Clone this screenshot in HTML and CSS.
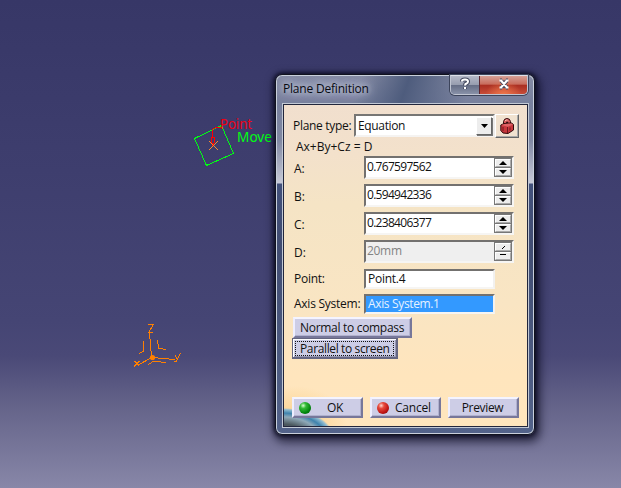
FILE: index.html
```html
<!DOCTYPE html>
<html lang="en">
<head>
<meta charset="utf-8">
<title>Plane Definition</title>
<link rel="stylesheet" href="styles.css">
</head>
<body>
<main class="workspace">
  <svg class="scene" width="621" height="488" viewBox="0 0 621 488">
    <g shape-rendering="crispEdges" fill="none">
      <path class="green" d="M194.5 138.5L221.500 125.500L233.500 153.500L206.500 165.500Z"/>
      <path class="red" d="M222 127.500H216L212.500 129.500V137.500M211 137.500h3M211.500 137V141L213 146L214.500 141V137"/>
      <path class="orange thin" d="M209 141L218 150M218 141L209 150"/>
      <path class="orange" d="M149.500 333L151.500 357M152 357.500L175 359.500M152 357.500L138 365M143.500 341V351L139.500 353.500M157.500 340L158.500 348.500L166.500 349.500M148.500 364.500L153 361.500H160L161.500 362.500H165.500"/>
      <path class="orange" d="M148 324.500H153.500L148.500 332.500H153M134.500 361L139.500 366.500M139.500 361L134 366.500M175 355L177.500 359.500M180.500 353.500L176 361.500H174"/>
    </g>
    <circle class="origin" cx="152.500" cy="357.500" r="2.600"/>
    <text class="cad red-text" x="220" y="129" textLength="32" lengthAdjust="spacingAndGlyphs">Point</text>
    <text class="cad green-text" x="237" y="142" textLength="35" lengthAdjust="spacingAndGlyphs">Move</text>
  </svg>

  <section class="dialog">
    <header class="titlebar">
      <h1 class="title">Plane Definition</h1>
      <div class="caption-buttons">
        <button class="caption help" aria-label="Help"><svg width="12" height="14" viewBox="0 0 12 14"><path class="glyph-edge" d="M3 4.500V4Q3 2.500 6 2.500T9 4.500Q9 6 7.500 6.500Q6 7 6 8.500M6 10.500v1.500"/><path class="glyph" d="M3 4.500V4Q3 2.500 6 2.500T9 4.500Q9 6 7.500 6.500Q6 7 6 8.500M6 10v2"/></svg></button>
        <button class="caption close" aria-label="Close"><svg width="14" height="14" viewBox="0 0 14 14"><path class="glyph-edge" d="M3 3.500H5M9 3.500H11M3 10.500H5M9 10.500H11M4 3.500L10 10.500M10 3.500L4 10.500"/><path class="glyph" d="M2.500 3.500H5.500M8.500 3.500H11.500M2.500 10.500H5.500M8.500 10.500H11.500M4 3.500L10 10.500M10 3.500L4 10.500"/></svg></button>
      </div>
    </header>

    <div class="client">
      <div class="type-row">
        <label class="type-label">Plane type:</label>
        <div class="combo"><span>Equation</span><i class="drop"><svg width="7" height="4"><path d="M0 0H7L3.500 4Z"/></svg></i></div>
        <button class="lock" aria-label="Lock"><svg width="16" height="18" viewBox="0 0 16 18">
          <path d="M4.500 8V4.500Q5 1.500 8 1.500T11.500 4.500V7" fill="#d75b5e" stroke="#310b0d"/>
          <path d="M7 8V6Q7 4.500 8 4.500T9.500 6V7" fill="#310b0d"/>
          <path d="M1.800 8L5 6.500L12.500 6L14.500 7.500V13L9 16.500L4 16L1.800 13.500Z" fill="#c7363c" stroke="#300b0c"/>
          <path d="M2.500 8L5.500 7L12 6.500L14 7.800L8.500 9.800Z" fill="#df6265"/>
          <path d="M8.500 10V16M4 10V14M11 10.500v3" stroke="#6e171d" fill="none"/>
          <path d="M6 4Q7 2.500 8.500 3" fill="none" stroke="#ffc1b5"/>
        </svg></button>
      </div>
      <p class="equation">Ax+By+Cz = D</p>

      <div class="fields">
        <div class="field"><label>A:</label><div class="spinner"><span>0.767597562</span><div class="steps"><i><svg width="8" height="4"><path d="M0 4H8L4 0Z"/></svg></i><i><svg width="8" height="4"><path d="M0 0H8L4 4Z"/></svg></i></div></div></div>
        <div class="field"><label>B:</label><div class="spinner"><span>0.594942336</span><div class="steps"><i><svg width="8" height="4"><path d="M0 4H8L4 0Z"/></svg></i><i><svg width="8" height="4"><path d="M0 0H8L4 4Z"/></svg></i></div></div></div>
        <div class="field"><label>C:</label><div class="spinner"><span>0.238406377</span><div class="steps"><i><svg width="8" height="4"><path d="M0 4H8L4 0Z"/></svg></i><i><svg width="8" height="4"><path d="M0 0H8L4 4Z"/></svg></i></div></div></div>
        <div class="field"><label>D:</label><div class="spinner disabled"><span>20mm</span><div class="steps"><i><svg width="8" height="4"><path d="M3 3h1v-1h1v-1h1v1h-1v1h-1v1H3Z"/></svg></i><i><svg width="8" height="4"><path d="M1 0H7V1H1Z"/></svg></i></div></div></div>
      </div>
      <div class="picks">
        <div class="pick"><label class="point-label">Point:</label><div class="entry"><span class="point-value">Point.4</span></div></div>
        <div class="pick"><label class="axis-label">Axis System:</label><div class="entry selected"><span class="axis-value">Axis System.1</span></div></div>
      </div>
      <div class="commands">
        <button class="push normal">Normal to compass</button>
        <button class="push parallel"><span>Parallel to screen</span></button>
      </div>
      <footer class="actions">
        <button class="push"><i class="ball go"></i><span class="ok">OK</span></button>
        <button class="push"><i class="ball stop"></i><span class="cancel">Cancel</span></button>
        <button class="push preview">Preview</button>
      </footer>
    </div>
  </section>
</main>
</body>
</html>
```
FILE: styles.css
```css
* { box-sizing: border-box; }
body { margin: 0; font: 12px/16px "Open Sans", "Noto Sans", sans-serif; color: #111; }
button { font: inherit; color: inherit; padding: 0; border: 0; }
svg { display: block; }
.workspace {
  position: relative;
  width: 621px;
  height: 488px;
  overflow: hidden;
  padding: 74px 0 0 275px;
  background: linear-gradient(#373767 0, #3e3e6e 35%, #454574 66%, #4a4977 73%, #646389 83%, #8887a8 100%);
}
.scene { position: absolute; left: 0; top: 0; }
.green { stroke: #00ff14; }
.red { stroke: #f00; }
.orange { stroke: #ff8000; }
.thin { stroke: #f28a30; }
.origin { fill: #ff8000; }
.cad { font: 14px "Noto Sans", sans-serif; }
.red-text { fill: #f00014; }
.green-text { fill: #00ff14; }

.dialog {
  position: relative;
  width: 260px;
  height: 361px;
  border: 1px solid #10121f;
  border-radius: 7px;
  padding: 0 6px 6px;
  background:
    linear-gradient(110deg, transparent 32%, #4e5c7d 50%, transparent 74%) 0 0 / 100% 30px no-repeat,
    linear-gradient(#858ba4 0, #77809d 28px, #8088a2 65px, #c7c9d7 108px, #42517b 109px, #414d72 170px, #53638a 100%);
  box-shadow: inset 0 0 0 1px #c8cfdb, 0 0 4px 1px #0b0b20, 2px 4px 10px 3px rgba(5,5,25,.65);
}
.titlebar { height: 28px; display: flex; justify-content: space-between; }
.title {
  margin: 6px 0 0 1px;
  font-size: 12px;
  line-height: 16px;
  font-weight: 400;
  letter-spacing: -.2px;
  color: #080a12;
  text-shadow: 0 0 6px #c5cbdc, 0 0 9px #c5cbdc, 0 0 12px #c5cbdc;
}
.caption-buttons { display: flex; height: 20px; border: 1px solid #c0c5d2; border-top-color: #dde0e9; border-radius: 0 0 5px 5px; overflow: hidden; box-shadow: 0 0 0 1px #3c445b; }
.caption { display: flex; justify-content: center; padding-top: 1px; }
.help { width: 28px; background: linear-gradient(#b5b9c8, #979daf 48%, #646c84 50%, #8891a8); }
.close { width: 48px; border-left: 1px solid #5d2731; background: radial-gradient(ellipse at 50% 110%, #f0794c, transparent 55%), linear-gradient(#d6a096, #c86b5b 46%, #a92e21 50%, #c74c38); }
.glyph-edge { stroke: #464b60; stroke-width: 4; fill: none; }
.glyph { stroke: #fff; stroke-width: 2; fill: none; }

.client {
  width: 247px;
  height: 325px;
  border: 1px solid #c2c9d5;
  padding: 10px 0 0 9px;
  display: flex;
  flex-direction: column;
  box-shadow: inset 0 0 0 1px #22263c;
  background:
    radial-gradient(ellipse 52px 32px at 0 336px, #2c3238 0, #4d5a60 50%, #8fa9b8 72%, #3f83ad 84%, #8fbbd0 95%, transparent 100%),
    radial-gradient(ellipse 52px 38px at 12px 320px, #f9cd84 0, #fcdaa2 50%, transparent 100%),
    linear-gradient(#f1dfce 0, #f3e1cb 50px, #f5e4c5 100px, #f9e5c3 200px, #ffe5bd 270px, #ffe6bd);
}
.type-row { display: flex; height: 25px; }
.type-label { width: 62px; padding: 4px 0 0 1px; white-space: nowrap; letter-spacing: -.3px; }
.combo { width: 141px; height: 23px; border: 2px solid; border-color: #777674 #eeeceb #f5f3f1 #777674; background: #fff; display: flex; justify-content: space-between; padding: 1px 1px 0 2px; letter-spacing: -.35px; }
.combo span { line-height: 18px; }
.drop { width: 16px; height: 18px; background: #ededed; border: 1px solid; border-color: #fff #666 #666 #fff; box-shadow: 1px 1px #777; display: grid; place-items: center; }
.lock { width: 24px; height: 24px; border: 1px solid; border-color: #fff #666 #666 #fff; box-shadow: inset -1px -1px #aaa; background: #f1e2d0; display: grid; place-items: center; }
.equation { margin: 0 0 0 4px; height: 17px; line-height: 15px; letter-spacing: 0; }
.fields { display: grid; gap: 5px; }
.field { display: flex; height: 23px; }
.field label { width: 72px; padding: 5px 0 0 2px; }
.spinner { width: 150px; height: 23px; background: #fff; border: 2px solid; border-color: #73716f #f6f5f3 #f6f5f3 #73716f; padding-left: 1px; display: flex; justify-content: space-between; }
.spinner span { line-height: 17px; letter-spacing: -.7px; }
.steps { width: 18px; height: 19px; background: #777; padding: 1px; }
.steps i { width: 16px; height: 8px; display: grid; place-items: center; background: #ededed; border: 1px solid; border-color: #fff #aaa #aaa #fff; }
.steps i + i { margin-top: 1px; }
.disabled { background: #efefef; color: #838383; }
.spinner.disabled span { letter-spacing: -.3px; }
.picks { margin-top: 6px; display: grid; gap: 5px; }
.pick { display: flex; height: 20px; }
.pick label { width: 72px; padding: 2px 0 0 2px; white-space: nowrap; }
.entry { width: 131px; height: 20px; background: #fff; border: 2px solid; border-color: #73716f #f2f1ef #f6f5f3 #73716f; padding-left: 2px; line-height: 16px; }
.point-label, .point-value { letter-spacing: -.25px; }
.selected { background: #3399ff; color: #e5f2ff; }
.axis-label { letter-spacing: -.25px; }
.axis-value { letter-spacing: -.35px; }
.commands { margin-top: 3px; display: flex; flex-direction: column; align-items: flex-start; }
.push { height: 21px; background: #cdcde6; border: 2px solid; border-color: #f4f4ff #77779a #77779a #eeeeff; box-shadow: inset -1px -1px #b1b1ce; line-height: 16px; display: flex; align-items: center; }
.normal { width: 119px; height: 21px; margin-left: 1px; padding-left: 5px; white-space: nowrap; letter-spacing: -.3px; }
.parallel { width: 106px; height: 21px; border-color: #666681; box-shadow: inset 1px 1px #fff, inset -1px -1px #9999b5; border-width: 1px 2px 2px 1px; padding-left: 2px; white-space: nowrap; letter-spacing: -.37px; }
.parallel span { width: 99px; height: 15px; line-height: 13px; border: 1px dotted #111; padding-left: 4px; text-align: left; }
.actions { margin-top: auto; margin-bottom: 9px; display: flex; gap: 7px; }
.actions .push { width: 71px; }
.ball { width: 12px; height: 12px; margin-left: 5px; border-radius: 50%; }
.go { background: radial-gradient(circle at 35% 30%, #d8ffd0 0, #33bb36 25%, #00840c 65%, #034d08); }
.stop { background: radial-gradient(circle at 35% 30%, #ffd8d0 0, #e84a3c 25%, #bd1212 65%, #5d0b0b); }
.ok { margin-left: 16px; letter-spacing: -.3px; }
.cancel { margin-left: 6px; letter-spacing: -.2px; }
.actions .preview { justify-content: center; padding-right: 2px; letter-spacing: -.35px; }
```
